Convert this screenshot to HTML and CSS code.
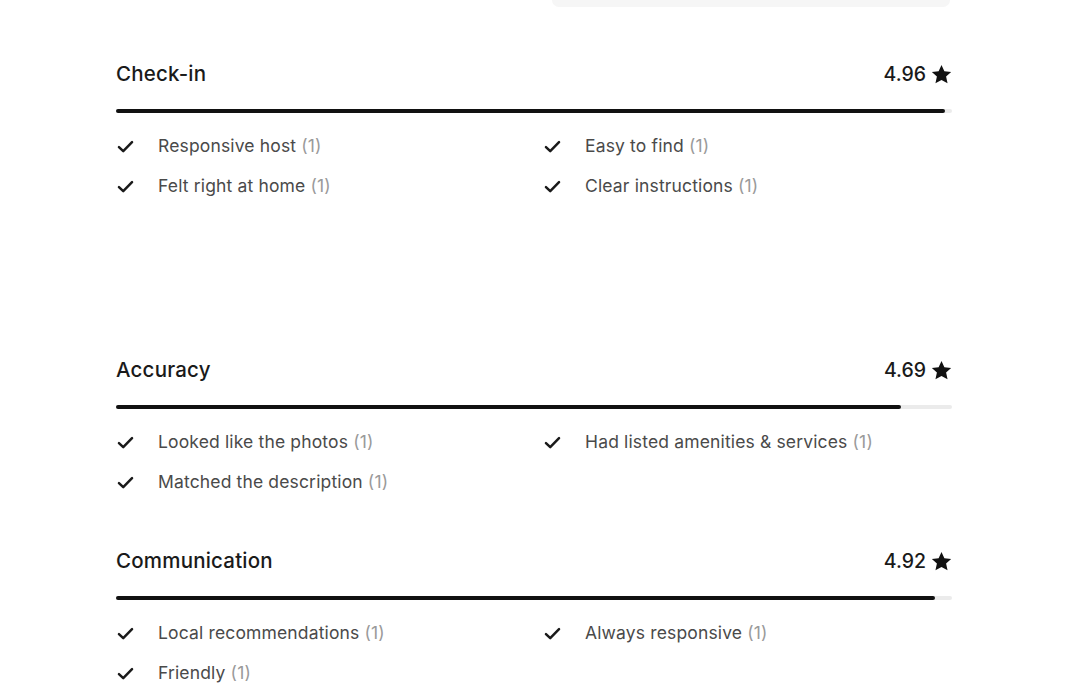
FILE: index.html
```html
<!DOCTYPE html>
<html lang="en">
<head>
<meta charset="utf-8">
<title>Ratings</title>
<link rel="stylesheet" href="styles.css">
</head>
<body>
<div class="page">
  <div class="ghost"></div>

  <section class="cat cat-first">
    <div class="head">
      <h2 class="title">Check-in</h2>
      <div class="score">4.96 <svg class="star" viewBox="0 0 32 32"><path d="M16 1.5l4.4 9.5 10.3 1.2-7.7 7 2.2 10.2L16 24.2l-9.2 5.2 2.2-10.2-7.7-7 10.3-1.2z"/></svg></div>
    </div>
    <div class="track"><div class="fill" style="width:99.2%"></div></div>
    <ul class="tags">
      <li><svg class="check" viewBox="0 0 16 16"><path d="M2.5 8.5l3.6 3.4 7.4-7.6"/></svg><span>Responsive host <em>(1)</em></span></li>
      <li><svg class="check" viewBox="0 0 16 16"><path d="M2.5 8.5l3.6 3.4 7.4-7.6"/></svg><span>Easy to find <em>(1)</em></span></li>
      <li><svg class="check" viewBox="0 0 16 16"><path d="M2.5 8.5l3.6 3.4 7.4-7.6"/></svg><span>Felt right at home <em>(1)</em></span></li>
      <li><svg class="check" viewBox="0 0 16 16"><path d="M2.5 8.5l3.6 3.4 7.4-7.6"/></svg><span>Clear instructions <em>(1)</em></span></li>
    </ul>
  </section>

  <section class="cat">
    <div class="head">
      <h2 class="title">Accuracy</h2>
      <div class="score">4.69 <svg class="star" viewBox="0 0 32 32"><path d="M16 1.5l4.4 9.5 10.3 1.2-7.7 7 2.2 10.2L16 24.2l-9.2 5.2 2.2-10.2-7.7-7 10.3-1.2z"/></svg></div>
    </div>
    <div class="track"><div class="fill" style="width:93.9%"></div></div>
    <ul class="tags">
      <li><svg class="check" viewBox="0 0 16 16"><path d="M2.5 8.5l3.6 3.4 7.4-7.6"/></svg><span>Looked like the photos <em>(1)</em></span></li>
      <li><svg class="check" viewBox="0 0 16 16"><path d="M2.5 8.5l3.6 3.4 7.4-7.6"/></svg><span>Had listed amenities &amp; services <em>(1)</em></span></li>
      <li><svg class="check" viewBox="0 0 16 16"><path d="M2.5 8.5l3.6 3.4 7.4-7.6"/></svg><span>Matched the description <em>(1)</em></span></li>
    </ul>
  </section>

  <section class="cat">
    <div class="head">
      <h2 class="title">Communication</h2>
      <div class="score">4.92 <svg class="star" viewBox="0 0 32 32"><path d="M16 1.5l4.4 9.5 10.3 1.2-7.7 7 2.2 10.2L16 24.2l-9.2 5.2 2.2-10.2-7.7-7 10.3-1.2z"/></svg></div>
    </div>
    <div class="track"><div class="fill" style="width:98%"></div></div>
    <ul class="tags">
      <li><svg class="check" viewBox="0 0 16 16"><path d="M2.5 8.5l3.6 3.4 7.4-7.6"/></svg><span>Local recommendations <em>(1)</em></span></li>
      <li><svg class="check" viewBox="0 0 16 16"><path d="M2.5 8.5l3.6 3.4 7.4-7.6"/></svg><span>Always responsive <em>(1)</em></span></li>
      <li><svg class="check" viewBox="0 0 16 16"><path d="M2.5 8.5l3.6 3.4 7.4-7.6"/></svg><span>Friendly <em>(1)</em></span></li>
    </ul>
  </section>
</div>
</body>
</html>
```

FILE: styles.css
```css
* { box-sizing: border-box; }

html, body {
  margin: 0;
  padding: 0;
  background: #ffffff;
}

body {
  font-family: Inter, "Noto Sans", "Liberation Sans", sans-serif;
  color: #222222;
  overflow: hidden;
  height: 700px;
}

.page {
  width: 836px;
  margin-left: 116px;
  display: flex;
  flex-direction: column;
}

.ghost {
  align-self: flex-end;
  width: 398px;
  height: 7px;
  margin-right: 2px;
  background: #f6f6f6;
  border-radius: 0 0 8px 8px;
}

.cat {
  margin-top: 55px;
  display: flex;
  flex-direction: column;
}

.cat-first {
  margin-top: 55px;
  padding-bottom: 105px;
}

.head {
  display: flex;
  justify-content: space-between;
  align-items: center;
  height: 24px;
}

.title {
  margin: 0;
  font-size: 20.5px;
  font-weight: 550;
  line-height: 24px;
  color: #1a1a1a;
  letter-spacing: 0.2px;
}

.score {
  display: flex;
  align-items: center;
  gap: 5px;
  font-size: 19.5px;
  font-weight: 500;
  line-height: 24px;
  color: #1a1a1a;
}

.star {
  width: 21px;
  height: 21px;
  fill: #111111;
}

.track {
  margin-top: 23px;
  height: 4px;
  background: #ebebeb;
  border-radius: 2px;
}

.fill {
  height: 4px;
  background: #111111;
  border-radius: 2px;
}

.tags {
  list-style: none;
  margin: 21px 0 0;
  padding: 0;
  display: grid;
  grid-template-columns: 1fr 1fr;
  column-gap: 18px;
  row-gap: 16px;
}

.tags li {
  display: flex;
  align-items: center;
  gap: 23px;
  height: 24px;
  font-size: 17.5px;
  line-height: 24px;
  letter-spacing: 0.15px;
  color: #4a4a4a;
}

.check {
  width: 19px;
  height: 19px;
  flex: none;
  fill: none;
  stroke: #1a1a1a;
  stroke-width: 2.1;
  stroke-linecap: round;
  stroke-linejoin: round;
}

.tags em {
  font-style: normal;
  color: #9a9a9a;
}
```
